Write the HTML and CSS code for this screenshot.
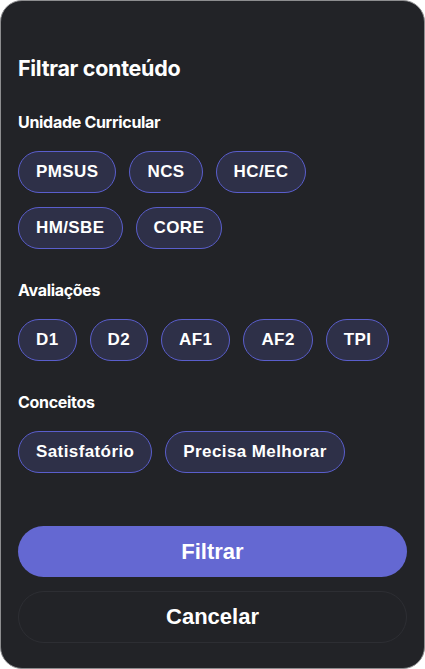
FILE: index.html
```html
<!DOCTYPE html>
<html lang="pt">
<head>
<meta charset="utf-8">
<link rel="stylesheet" href="styles.css">
</head>
<body>
<div class="card">
  <h1 class="title">Filtrar conteúdo</h1>
  <section class="group">
    <h2 class="label">Unidade Curricular</h2>
    <div class="chips">
      <span class="chip">PMSUS</span>
      <span class="chip">NCS</span>
      <span class="chip">HC/EC</span>
      <span class="chip">HM/SBE</span>
      <span class="chip">CORE</span>
    </div>
  </section>
  <section class="group">
    <h2 class="label">Avaliações</h2>
    <div class="chips">
      <span class="chip">D1</span>
      <span class="chip">D2</span>
      <span class="chip">AF1</span>
      <span class="chip">AF2</span>
      <span class="chip">TPI</span>
    </div>
  </section>
  <section class="group">
    <h2 class="label">Conceitos</h2>
    <div class="chips">
      <span class="chip">Satisfatório</span>
      <span class="chip">Precisa Melhorar</span>
    </div>
  </section>
  <div class="actions">
    <button class="btn btn-primary">Filtrar</button>
    <button class="btn btn-ghost">Cancelar</button>
  </div>
</div>
</body>
</html>
```
FILE: styles.css
```css
* { box-sizing: border-box; }
html, body { margin: 0; padding: 0; background: #ffffff; }
.card {
  width: 425px;
  height: 669px;
  background: #222327;
  border: 1px solid #8d8d8f;
  border-radius: 22px;
  padding: 54px 17px 0 17px;
  display: flex;
  flex-direction: column;
  color: #ffffff;
}
.title {
  margin: 0;
  font-family: Inter, "Liberation Sans", sans-serif;
  font-weight: 700;
  font-size: 21.5px;
  line-height: 26px;
  letter-spacing: -0.3px;
}
.group {
  margin-top: 31px;
  display: flex;
  flex-direction: column;
  gap: 19px;
}
.label {
  margin: 0;
  font-family: Inter, "Liberation Sans", sans-serif;
  font-weight: 700;
  font-size: 16px;
  line-height: 20px;
  letter-spacing: -0.3px;
}
.chips {
  display: flex;
  flex-wrap: wrap;
  column-gap: 13px;
  row-gap: 14px;
}
.chip {
  height: 42px;
  padding: 0 17px;
  border: 1px solid #5a5ecc;
  border-radius: 21px;
  background: #2e3048;
  display: inline-flex;
  align-items: center;
  font-family: "Liberation Sans", Arial, sans-serif;
  font-weight: 700;
  font-size: 17px;
  letter-spacing: 0.4px;
  color: #ffffff;
}
.actions {
  margin-top: 53px;
  display: flex;
  flex-direction: column;
  gap: 14px;
}
.btn {
  width: 100%;
  height: 51px;
  border-radius: 26px;
  font-family: "Liberation Sans", Arial, sans-serif;
  font-weight: 700;
  font-size: 22px;
  color: #ffffff;
  cursor: pointer;
}
.btn-primary {
  background: #6468d2;
  border: none;
}
.btn-ghost {
  height: 52px;
  background: transparent;
  border: 1px solid #2d2e33;
}
```
